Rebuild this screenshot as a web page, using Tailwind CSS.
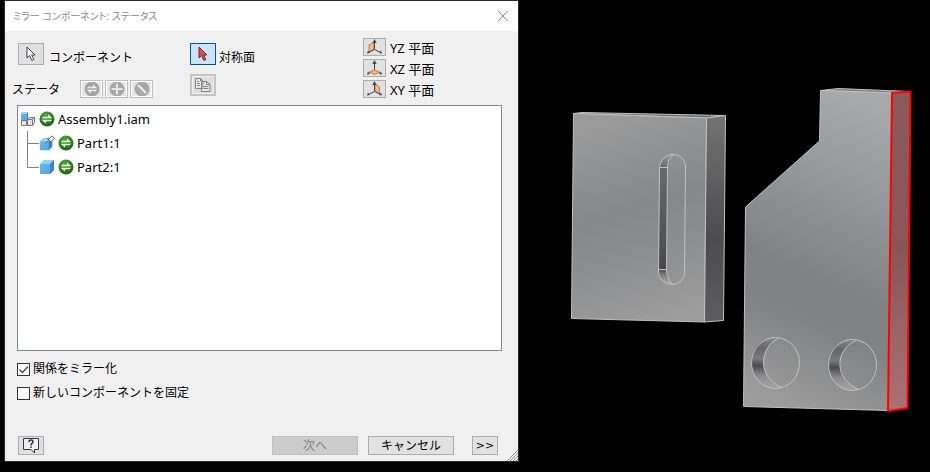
<!DOCTYPE html>
<html lang="ja">
<head>
<meta charset="utf-8">
<meta name="viewport" content="width=device-width, initial-scale=1">
<title>ミラー コンポーネント</title>
<script src="https://cdn.jsdelivr.net/npm/@tailwindcss/browser@4"></script>
</head>
<body class="flex h-screen overflow-hidden bg-black pl-1 font-['Noto_Sans','Noto_Sans_CJK_JP',sans-serif] text-black">

<svg class="absolute size-0" aria-hidden="true">
  <defs>
    <radialGradient id="green" cx="40%" cy="25%" r="80%"><stop offset="0" stop-color="#4fab38"/><stop offset="1" stop-color="#15620c"/></radialGradient>
    <linearGradient id="cube" x1="0" y1="0" x2="1" y2="1"><stop offset="0" stop-color="#6cc0f2"/><stop offset="1" stop-color="#4f9fdc"/></linearGradient>
  </defs>
  <symbol id="mirror" viewBox="0 0 16 16">
    <circle cx="8" cy="8" r="7.5" fill="url(#green)"/>
    <path d="M3 7.3h10.3L9 3.6v2.2H4.2zM13 8.7H2.7L7 12.4v-2.2h4.8z" fill="#fff"/>
  </symbol>
  <symbol id="part" viewBox="0 0 16 16">
    <path d="M1 5l4-4h10v10l-4 4H1z" fill="url(#cube)"/>
    <path d="M1 5l4-4h10l-4 4z" fill="#8ed3f8"/>
    <path d="M11 5l4-4v10l-4 4z" fill="#3a86c0"/>
  </symbol>
  <symbol id="axes" viewBox="0 0 19 16">
    <path d="M9.500 2.500v8L3.500 13.500M9.500 10.500l6 3" fill="none" stroke="#444a55"/>
    <path d="M9.500 0l2.200 4H7.300zM2 14.500l1-3 2 2.500zM17 14.500l-1-3-2 2.500z" fill="#444a55"/>
  </symbol>
</svg>

<main class="relative mb-[10px] flex w-[515px] shrink-0 flex-col border border-[#2b2b2b] bg-[#f0f0f0]">
  <header class="flex h-[30px] shrink-0 items-center justify-between bg-white pr-[9px] pl-2">
    <h1 class="text-[10px] text-[#8a8a8a] [font-feature-settings:'palt']">ミラー コンポーネント: ステータス</h1>
    <button aria-label="閉じる"><svg class="size-3" viewBox="0 0 12 12"><path d="M1 1l10 10M11 1L1 11" stroke="#8a8a8a" fill="none"/></svg></button>
  </header>

  <div class="flex min-h-0 flex-1 flex-col pr-4 pb-[6px] pl-3 text-[12px] leading-4">
    <section class="grid h-[74px] shrink-0 grid-cols-[173fr_173fr_139fr]">
      <div class="pt-3">
        <div class="flex items-end gap-[5px] pl-px">
          <button id="component" class="flex h-[22px] w-[26px] items-center justify-center border border-[#adadad] bg-[#e1e1e1]">
            <svg class="h-4 w-3" viewBox="0 0 12 16"><path d="M2 1v11l2.600-2.400L6.800 14.500l2-1L6.700 9H10z" fill="#fff" stroke="#39404c"/></svg>
          </button>
          <label for="component" class="-mb-px">コンポーネント</label>
        </div>
        <div class="mt-[14px] -ml-[5px] flex items-center gap-5">
          <span class="pt-[3px]">ステータ</span>
          <div class="flex gap-[2px]">
            <button disabled aria-label="ミラー" class="flex h-[18px] w-[23px] items-center justify-center border border-[#bfbfbf] bg-[#e6e6e6] outline-1 -outline-offset-2 outline-white"><svg class="size-4" viewBox="0 0 16 16"><circle cx="8" cy="8" r="7.500" fill="#a4a4a4"/><path d="M3 7.300h10.300L9 3.600v2.200H4.200zM13 8.700H2.700L7 12.400v-2.200h4.800z" fill="#efefef"/></svg></button>
            <button disabled aria-label="再利用" class="flex h-[18px] w-[23px] items-center justify-center border border-[#bfbfbf] bg-[#e6e6e6] outline-1 -outline-offset-2 outline-white"><svg class="size-4" viewBox="0 0 16 16"><circle cx="8" cy="8" r="7.500" fill="#a8a8a8"/><path d="M8 2.500v11M2.500 8h11" stroke="#e6e6e6" stroke-width="2"/></svg></button>
            <button disabled aria-label="除外" class="flex h-[18px] w-[23px] items-center justify-center border border-[#bfbfbf] bg-[#e6e6e6] outline-1 -outline-offset-2 outline-white"><svg class="size-4" viewBox="0 0 16 16"><circle cx="8" cy="8" r="7.500" fill="#a8a8a8"/><path d="M4 4l8 8" stroke="#ececec" stroke-width="2"/></svg></button>
          </div>
        </div>
      </div>
      <div class="pt-3">
        <div class="flex items-end gap-[3px]">
          <button id="plane" class="flex h-[22px] w-[26px] items-center justify-center border border-[#005499] bg-[#cce4f7]">
            <svg class="h-4 w-3" viewBox="0 0 12 16"><path d="M2 1v11l2.600-2.400L6.800 14.500l2-1L6.700 9H10z" fill="#f04545" stroke="#5c3540"/></svg>
          </button>
          <label for="plane" class="-mb-px">対称面</label>
        </div>
        <button disabled aria-label="コピー" class="mt-[9px] flex h-[22px] w-[26px] items-center justify-center border-2 border-[#c4c4c4] bg-[#dedede] outline-1 -outline-offset-3 outline-[#f0f0f0]">
          <svg class="h-[14px] w-4" viewBox="0 0 16 14"><path d="M.5 .5h5l2.500 2.500v7.500H.5zM6.500 3.500h5l3.500 3v7H6.500z" fill="#e8e8e8" stroke="#858585"/><path d="M5.500 .5V3H8M11.500 3.500v3h3.500M2 5.500h3M2 7.500h3M8.500 8.500h5M8.500 10.500h5M2 3.500h2" stroke="#858585" fill="none"/></svg>
        </button>
      </div>
      <div class="flex flex-col gap-[3px] pt-[7px] text-[13px]">
        <div class="flex h-[18px] items-center gap-1">
          <button id="yz" class="flex h-[18px] w-[23px] items-center justify-center border border-[#adadad] bg-[#e1e1e1]"><svg class="h-4 w-[19px]" viewBox="0 0 19 16"><path d="M4 6l5-3v7l-5 3z" fill="#f2b890" stroke="#d07840"/><use href="#axes"/></svg></button>
          <label for="yz" class="pt-[2px]">YZ 平面</label>
        </div>
        <div class="flex h-[18px] items-center gap-1">
          <button id="xz" class="flex h-[18px] w-[23px] items-center justify-center border border-[#adadad] bg-[#e1e1e1]"><svg class="h-4 w-[19px]" viewBox="0 0 19 16"><use href="#axes"/><path d="M4.500 12l5-2 5 2-5 2.500z" fill="#f2b890" stroke="#d07840"/></svg></button>
          <label for="xz" class="pt-[2px]">XZ 平面</label>
        </div>
        <div class="flex h-[18px] items-center gap-1">
          <button id="xy" class="flex h-[18px] w-[23px] items-center justify-center border border-[#adadad] bg-[#e1e1e1]"><svg class="h-4 w-[19px]" viewBox="0 0 19 16"><path d="M10 3l4.500 3v7L10 10z" fill="#f2b890" stroke="#d07840"/><use href="#axes"/></svg></button>
          <label for="xy" class="pt-[2px]">XY 平面</label>
        </div>
      </div>
    </section>

    <div class="min-h-0 flex-1 border border-[#828790] bg-white pt-px pl-[2px] text-[13px]">
      <div class="flex h-6 items-center gap-[3px]">
        <svg class="size-4" viewBox="0 0 16 16"><path d="M1 3l2-2h5v6L7 9H1z" fill="url(#cube)"/><path d="M1 3l2-2h5L7 3z" fill="#8ed3f8"/><path d="M7 3l1-2v6L7 9z" fill="#3a86c0"/><path d="M1.500 9.500h5v5h-5zM7.500 8.500l2-2h5v5l-2 3h-5zM7.500 8.500h5v6M12.500 8.500l2-2" fill="#e4e4e4" stroke="#777"/></svg>
        <svg class="size-4"><use href="#mirror"/></svg>
        <span>Assembly1.iam</span>
      </div>
      <ul>
        <li class="flex h-6 items-center gap-[3px] pl-[7px]">
          <svg class="-mr-[3px] h-6 w-3" viewBox="0 0 12 24"><path d="M.5 0v24M.5 12.500H12" stroke="#808080" fill="none"/></svg>
          <svg class="size-4" viewBox="0 0 16 16"><g transform="translate(0 2) scale(.88)"><use href="#part" width="16" height="16"/></g><path d="M6.500 8.500l3-3M8.500 3.500l4 4 .5-2 2.500-2L13 .8l-2 2.200z" fill="#fff" stroke="#666"/></svg>
          <svg class="size-4"><use href="#mirror"/></svg>
          <span>Part1:1</span>
        </li>
        <li class="flex h-6 items-center gap-[3px] pl-[7px]">
          <svg class="-mr-[3px] h-6 w-3" viewBox="0 0 12 24"><path d="M.5 0v12.500H12" stroke="#808080" fill="none"/></svg>
          <svg class="size-4"><use href="#part"/></svg>
          <svg class="size-4"><use href="#mirror"/></svg>
          <span>Part2:1</span>
        </li>
      </ul>
    </div>

    <div class="mt-[6px] mb-[31px]">
      <label class="flex h-6 items-center gap-[3px]">
        <span class="grid size-[13px]">
          <input type="checkbox" checked class="peer col-start-1 row-start-1 size-[13px] appearance-none border border-[#333] bg-white">
          <svg class="pointer-events-none invisible col-start-1 row-start-1 size-[13px] peer-checked:visible" viewBox="0 0 13 13"><path d="M2.500 6.500l3 3 5.500-6" stroke="#444" stroke-width="1.300" fill="none"/></svg>
        </span>
        関係をミラー化
      </label>
      <label class="flex h-6 items-center gap-[3px]">
        <span class="grid size-[13px]">
          <input type="checkbox" class="peer col-start-1 row-start-1 size-[13px] appearance-none border border-[#333] bg-white">
          <svg class="pointer-events-none invisible col-start-1 row-start-1 size-[13px] peer-checked:visible" viewBox="0 0 13 13"><path d="M2.500 6.500l3 3 5.500-6" stroke="#444" stroke-width="1.300" fill="none"/></svg>
        </span>
        新しいコンポーネントを固定
      </label>
    </div>

    <footer class="flex items-center pr-1 pl-px">
      <button aria-label="ヘルプ" class="mr-auto flex h-[19px] w-[26px] items-center justify-center border border-[#adadad] bg-[#e1e1e1]">
        <svg class="h-[17px] w-[18px]" viewBox="0 0 18 17"><path d="M1.500 1.500h15v11h-4V16l-3.500-3.500H1.500z" fill="#edf0f5" stroke="#333a45"/><path d="M7 5q0-2 2-2t2 1.800q0 1-1 1.600T9 8.500M9 9.500V11" fill="none" stroke="#2b313b" stroke-width="1.500"/></svg>
      </button>
      <button disabled class="mr-[10px] h-[19px] w-[86px] border border-[#bfbfbf] bg-[#ccc] text-[#838383]"><span class="block leading-[17px]">次へ</span></button>
      <button class="mr-[18px] h-[19px] w-[86px] border border-[#adadad] bg-[#e1e1e1]"><span class="block leading-[17px]">キャンセル</span></button>
      <button class="h-[19px] w-[26px] border border-[#adadad] bg-[#e1e1e1]"><span class="block font-['DejaVu_Sans',sans-serif] text-[11px] leading-[17px]">&gt;&gt;</span></button>
    </footer>
  </div>
  <svg class="absolute right-0 bottom-0 size-3" viewBox="0 0 12 12"><path d="M1 12L12 1M4 12l8-8M7 12l5-5M10 12l2-2" stroke="#8a8a8a" fill="none"/></svg>
</main>

<svg class="h-full min-w-0 flex-1" viewBox="519 0 411 472" preserveAspectRatio="xMinYMin meet" role="img" aria-label="3D モデル">
  <defs>
    <linearGradient id="face1" x1=".4" y1="0" x2=".6" y2="1"><stop offset="0" stop-color="#9b9b9c"/><stop offset=".25" stop-color="#8f9091"/><stop offset=".45" stop-color="#868788"/><stop offset=".65" stop-color="#8c8d8e"/><stop offset="1" stop-color="#9c9c9d"/></linearGradient>
    <linearGradient id="side1" x1="0" y1="0" x2="0" y2="1"><stop offset="0" stop-color="#737374"/><stop offset=".6" stop-color="#4c4c4e"/><stop offset="1" stop-color="#5e5e61"/></linearGradient>
    <linearGradient id="face2" x1=".65" y1="0" x2=".45" y2="1"><stop offset="0" stop-color="#a8a9aa"/><stop offset=".3" stop-color="#959697"/><stop offset=".6" stop-color="#808182"/><stop offset=".75" stop-color="#828384"/><stop offset="1" stop-color="#9b9b9c"/></linearGradient>
    <linearGradient id="side2" x1="0" y1="0" x2="0" y2="1"><stop offset="0" stop-color="#8b5a5c"/><stop offset=".5" stop-color="#8a5557"/><stop offset="1" stop-color="#ab7274"/></linearGradient>
    <linearGradient id="bore" x1="0" y1="0" x2="0" y2="1"><stop offset="0" stop-color="#8a8a8c"/><stop offset=".2" stop-color="#656568"/><stop offset=".4" stop-color="#7b7b7e"/><stop offset=".55" stop-color="#4c4c4e"/><stop offset=".75" stop-color="#8c8c8e"/><stop offset="1" stop-color="#a5a5a6"/></linearGradient>
    <linearGradient id="slot" x1="0" y1="0" x2="0" y2="1"><stop offset="0" stop-color="#999"/><stop offset=".1" stop-color="#666"/><stop offset=".12" stop-color="#686869"/><stop offset=".88" stop-color="#48484a"/><stop offset=".92" stop-color="#777"/><stop offset="1" stop-color="#b0b0b0"/></linearGradient>
  </defs>
  <g stroke="#c0c0c0" stroke-linejoin="round">
    <path d="M573.500 113.500L582 112.500L725.500 115.500L706.500 118z" fill="#707071"/>
    <path d="M573.500 113.500L706.500 118L704.500 322L571.500 318.500z" fill="url(#face1)"/>
    <path d="M706.500 118L725.500 115.500L723.500 320.500L704.500 322z" fill="url(#side1)"/>
    <path d="M674 154.500C665 154 660 161 659.500 168L658.500 272C659 279 664 284 673 284.500C669 281 666.500 276 666.500 270L667.500 167C667.500 161 670 157 674 154.500z" fill="url(#slot)"/>
    <path d="M674 154.500C680 155 685.500 160 685.500 167L684.500 272C684.500 279 679 284 673 284.500M659.500 167.500h8M658.500 269.500h8" fill="none"/>
    <path d="M820.500 90.500L838 88.500L910 91.500L892 93z" fill="#808081"/>
    <path d="M820.500 90.500L892 93L888 410.500L743.500 406.500L745.500 207L819.500 141z" fill="url(#face2)"/>
    <path d="M778 338C744 334 743 384 773 388.500L782 387.500C757 378 759 348 778 338z" fill="url(#bore)" stroke="none"/>
    <path d="M856 340C821 335 820 386 850 390.500L859 389.500C834 380 834 350 856 340z" fill="url(#bore)" stroke="none"/>
    <path d="M778 338.500C759 348 757 378 782 387.500M856 340.500C834 350 834 380 859 389.500" fill="none"/>
    <ellipse cx="775.500" cy="363" rx="24" ry="25.500" fill="none"/>
    <ellipse cx="852.500" cy="365" rx="24" ry="25.500" fill="none"/>
  </g>
  <path d="M892 93L910.500 91.500L907.500 408L888 411z" fill="url(#side2)" stroke="#f00" stroke-width="2" stroke-linejoin="round"/>
</svg>
</body>
</html>
